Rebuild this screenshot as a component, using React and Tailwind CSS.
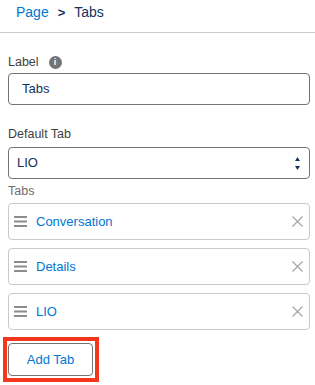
import React from 'react';

const tabs = ['Conversation', 'Details', 'LIO'];

const DragHandle = () => (
    <svg width="13" height="11" viewBox="0 0 13 11" className="shrink-0">
        <rect x="0" y="0" width="13" height="2" fill="#8c8c8c" />
        <rect x="0" y="4.5" width="13" height="2" fill="#8c8c8c" />
        <rect x="0" y="9" width="13" height="2" fill="#8c8c8c" />
    </svg>
);

const CloseIcon = () => (
    <svg width="11" height="11" viewBox="0 0 11 11" className="shrink-0">
        <path d="M0.5 0.5 L10.5 10.5 M10.5 0.5 L0.5 10.5" stroke="#a8a8a8" strokeWidth="1.3" />
    </svg>
);

export default function App() {
    return (
        <div className="w-[315px] h-[385px] bg-white overflow-hidden font-['Liberation_Sans',Arial,sans-serif]">
            {/* Breadcrumb */}
            <div className="h-[33px] border-b border-[#c9c9c9] flex items-center pl-4 gap-[9px] text-[14px] pb-[7px]">
                <span className="text-[#0176d3]">Page</span>
                <span className="text-[#16325c] font-bold text-[13px]">&gt;</span>
                <span className="text-[#16325c]">Tabs</span>
            </div>

            <div className="pl-2 pr-[5px] pt-[20px]">
                {/* Label */}
                <div className="flex items-center gap-[10px] h-[18px] text-[12.5px] text-[#3e3e3c]">
                    <span>Label</span>
                    <span className="w-[13px] h-[13px] rounded-full bg-[#747474] flex items-center justify-center text-white text-[9px] font-bold leading-none">i</span>
                </div>
                <div className="mt-[2px] h-[32px] border border-[#747474] rounded-[4px] flex items-center pl-[13px] text-[13px] text-[#16325c]">
                    Tabs
                </div>

                {/* Default Tab */}
                <div className="mt-[20px] h-[18px] flex items-center text-[12.5px] text-[#3e3e3c]">
                    Default Tab
                </div>
                <div className="mt-[4px] h-[32px] border border-[#747474] rounded-[4px] flex items-center justify-between pl-[8px] pr-[9px] text-[13px] text-[#16325c]">
                    <span>LIO</span>
                    <svg width="5" height="13" viewBox="0 0 5 13">
                        <path d="M2.5 0 L5 4 L0 4 Z" fill="#16325c" />
                        <path d="M0 9 L5 9 L2.5 13 Z" fill="#16325c" />
                    </svg>
                </div>

                {/* Tabs list */}
                <div className="mt-[3px] h-[18px] flex items-center text-[12.5px] text-[#706e6b]">
                    Tabs
                </div>
                <div className="mt-[3px] flex flex-col gap-[8px]">
                    {tabs.map((t) => (
                        <div key={t} className="h-[37px] border border-[#c9c9c9] rounded-[4px] flex items-center pl-[5px] pr-[6px]">
                            <DragHandle />
                            <span className="ml-[9px] flex-1 text-[13px] text-[#0176d3]">{t}</span>
                            <CloseIcon />
                        </div>
                    ))}
                </div>

                {/* Add Tab */}
                <div className="mt-[7px] -ml-[5px] w-[96px] h-[45px] border-[4px] border-[#f5361f] pl-px pt-[2px]">
                    <button className="w-[85px] h-[33px] border border-[#747474] rounded-[4px] bg-white text-[13px] text-[#0176d3]">
                        Add Tab
                    </button>
                </div>
            </div>
        </div>
    );
}
